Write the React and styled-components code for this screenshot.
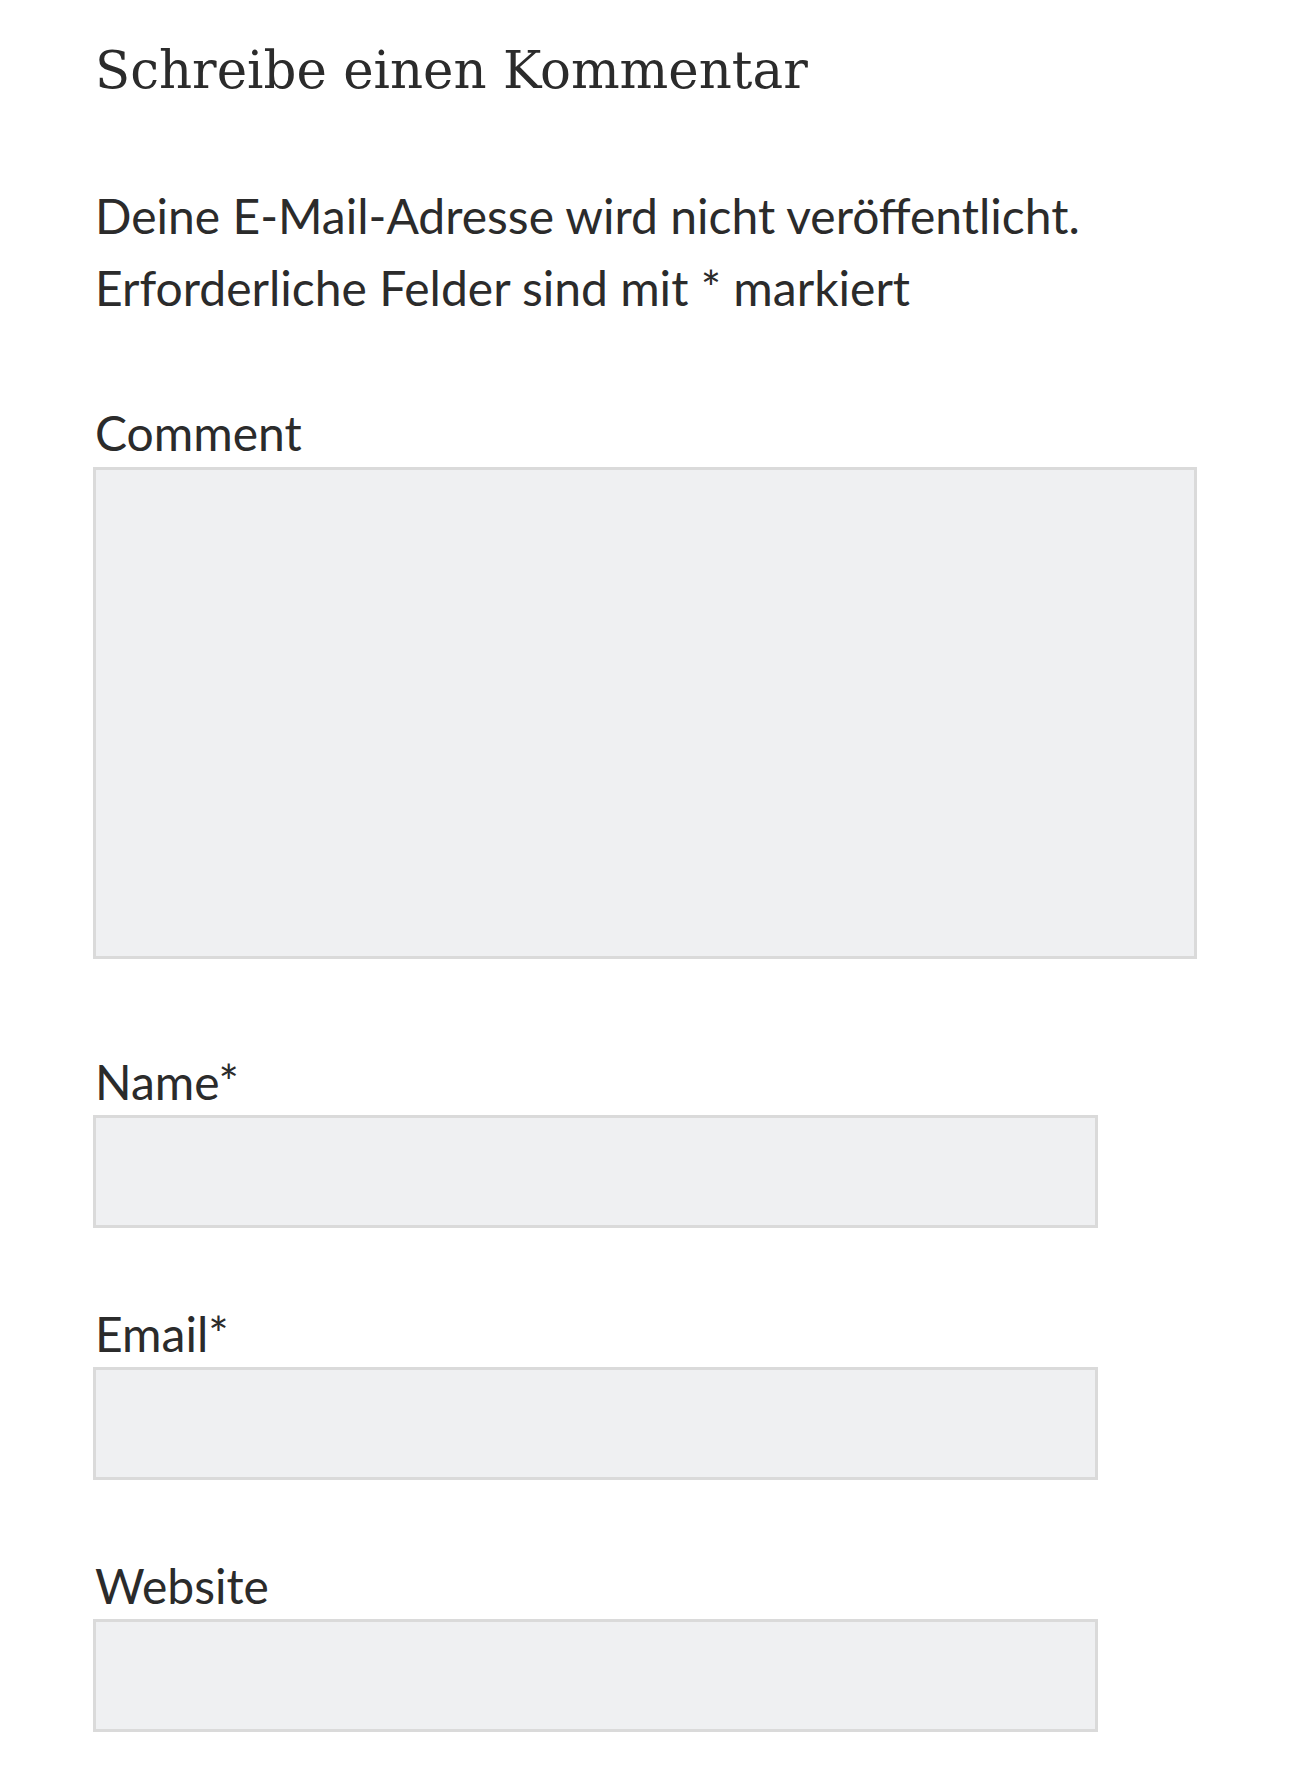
import React from "react";
import styled, { createGlobalStyle } from "styled-components";

const Global = createGlobalStyle`
  html, body { margin: 0; padding: 0; background: #ffffff; }
  body { font-family: Lato, "Open Sans", sans-serif; color: #2b2b2b; }
  * { box-sizing: border-box; }
`;

const Page = styled.div`
  padding: 45px 93px 40px;
  min-height: 1777px;
`;

const Title = styled.h3`
  margin: 0;
  padding-left: 2px;
  font-family: "DejaVu Serif", "Liberation Serif", serif;
  font-weight: 400;
  font-size: 51.4px;
  line-height: 1;
  color: #2b2b2b;
`;

const Notes = styled.p`
  margin: 84px 0 0;
  padding-left: 2px;
  font-size: 48px;
  line-height: 72px;
  color: #2b2b2b;
`;

const Field = styled.div`
  display: flex;
  flex-direction: column;
  margin-top: ${(p) => p.$gap}px;
`;

const Label = styled.label`
  padding-left: 2px;
  font-size: 48px;
  line-height: 67.2px;
  color: #2b2b2b;
`;

const TextArea = styled.textarea`
  display: block;
  width: 100%;
  height: 492px;
  margin: 0;
  padding: 0;
  resize: none;
  background: #eff0f2;
  border: 3px solid #dadada;
  border-radius: 0;
  outline: none;
`;

const Input = styled.input`
  display: block;
  width: 1005px;
  height: 113px;
  margin: 0;
  padding: 0;
  background: #eff0f2;
  border: 3px solid #dadada;
  border-radius: 0;
  outline: none;
`;

export default function App() {
  return (
    <>
      <Global />
      <Page>
        <Title>Schreibe einen Kommentar</Title>
        <Notes>
          Deine E-Mail-Adresse wird nicht veröffentlicht. Erforderliche Felder sind mit * markiert
        </Notes>
        <Field $gap={75}>
          <Label>Comment</Label>
          <TextArea />
        </Field>
        <Field $gap={89}>
          <Label>Name*</Label>
          <Input type="text" />
        </Field>
        <Field $gap={72}>
          <Label>Email*</Label>
          <Input type="email" />
        </Field>
        <Field $gap={72}>
          <Label>Website</Label>
          <Input type="url" />
        </Field>
      </Page>
    </>
  );
}
